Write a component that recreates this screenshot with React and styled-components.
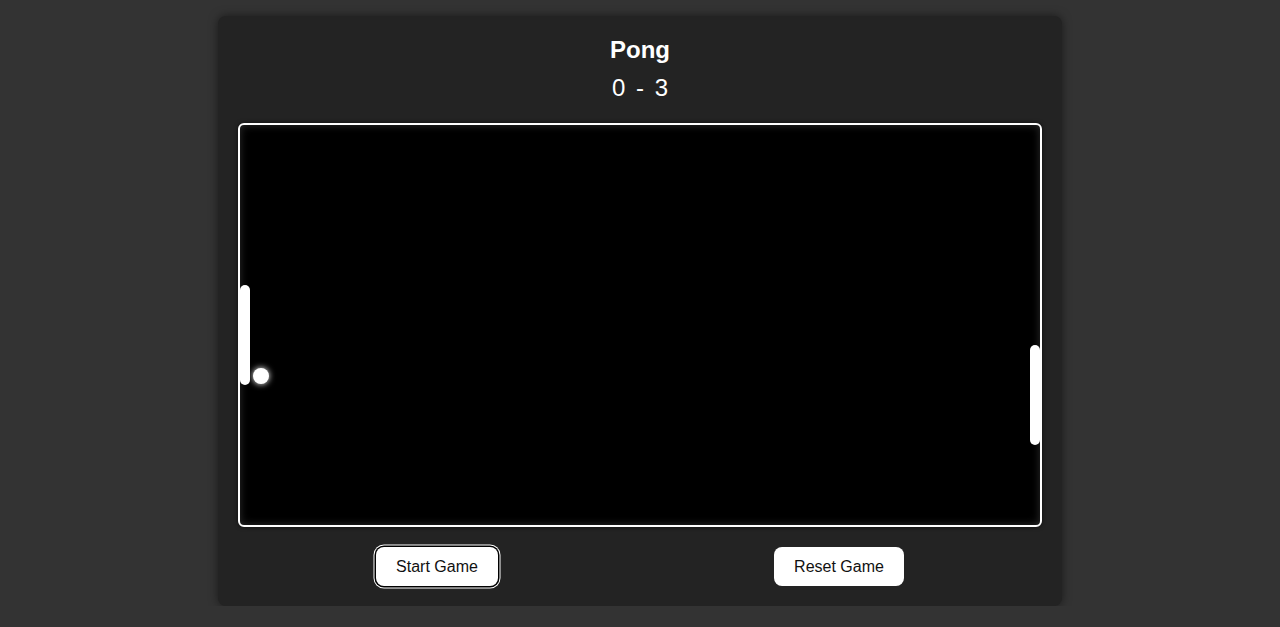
import React from 'react';
import styled, { createGlobalStyle } from 'styled-components';

const GlobalStyle = createGlobalStyle`
  html, body {
    margin: 0;
    padding: 0;
    background: #333333;
    font-family: "Liberation Sans", Arial, sans-serif;
  }
`;

const Page = styled.div`
  display: flex;
  justify-content: center;
  padding-top: 16px;
`;

const Card = styled.div`
  width: 804px;
  padding: 20px;
  background: #232323;
  border-radius: 8px;
  box-shadow: 0 0 10px rgba(0, 0, 0, 0.5);
  display: flex;
  flex-direction: column;
  align-items: center;
`;

const Title = styled.h1`
  margin: 0;
  font-size: 24px;
  line-height: 28px;
  font-weight: bold;
  color: #ffffff;
`;

const Score = styled.div`
  margin: 10px 0 21px;
  font-size: 24px;
  line-height: 28px;
  color: #ffffff;
  word-spacing: 4px;
`;

const Field = styled.div`
  width: 800px;
  height: 400px;
  border: 2px solid #ffffff;
  border-radius: 6px;
  background: #000000;
  box-shadow: inset 0 0 8px rgba(255, 255, 255, 0.18), 0 0 4px rgba(0, 0, 0, 0.6);
  overflow: hidden;
`;

const Controls = styled.div`
  width: 100%;
  margin-top: 20px;
  display: flex;
  justify-content: space-around;
`;

const Button = styled.button`
  border: none;
  border-radius: 8px;
  background: #ffffff;
  color: #111111;
  font-family: "Liberation Sans", Arial, sans-serif;
  font-size: 16px;
  line-height: 19px;
  padding: 10px 20px;
  height: 39px;
  cursor: pointer;
  box-shadow: ${(p) => (p.focused ? '0 0 0 1.5px #000000, 0 0 0 2.5px #ffffff' : 'none')};
`;

const paddles = [
  { x: 0, y: 160 },
  { x: 790, y: 220 },
];

const ball = { x: 21, y: 251, r: 8 };

export default function App() {
  return (
    <>
      <GlobalStyle />
      <Page>
        <Card>
          <Title>Pong</Title>
          <Score>0 - 3</Score>
          <Field>
            <svg width="800" height="400" viewBox="0 0 800 400">
              <defs>
                <filter id="glow" x="-100%" y="-100%" width="300%" height="300%">
                  <feGaussianBlur stdDeviation="3" result="b" />
                  <feMerge>
                    <feMergeNode in="b" />
                    <feMergeNode in="SourceGraphic" />
                  </feMerge>
                </filter>
              </defs>
              {paddles.map((p, i) => (
                <rect key={i} x={p.x} y={p.y} width="10" height="100" rx="5" fill="#ffffff" />
              ))}
              <circle cx={ball.x} cy={ball.y} r={ball.r} fill="#ffffff" filter="url(#glow)" />
            </svg>
          </Field>
          <Controls>
            <Button focused>Start Game</Button>
            <Button>Reset Game</Button>
          </Controls>
        </Card>
      </Page>
    </>
  );
}
